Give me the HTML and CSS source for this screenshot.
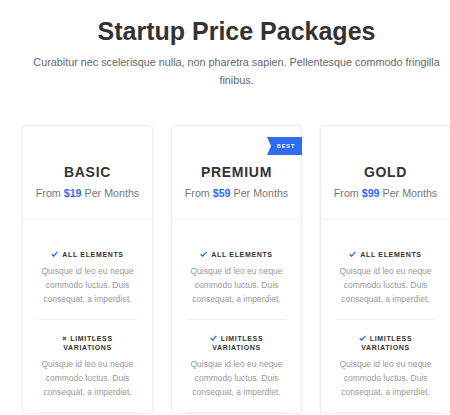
FILE: index.html
```html
<!DOCTYPE html>
<html>
<head>
<meta charset="utf-8">
<link rel="stylesheet" href="styles.css">
</head>
<body>
<div class="page">
  <header class="intro">
    <h1 class="title">Startup Price Packages</h1>
    <p class="lead">Curabitur nec scelerisque nulla, non pharetra sapien. Pellentesque commodo fringilla finibus.</p>
  </header>
  <div class="plans">
    <div class="card">
      <div class="card-head">
        <h2 class="plan">BASIC</h2>
        <p class="price">From <b>$19</b> Per Months</p>
      </div>
      <ul class="features">
        <li class="feature">
          <h3 class="ftitle"><svg class="ico" viewBox="0 0 10 8"><path d="M1 4.2 L3.8 7 L9 1" fill="none" stroke="#2f6cf0" stroke-width="2"/></svg>ALL ELEMENTS</h3>
          <p class="fdesc">Quisque id leo eu neque commodo luctus. Duis consequat, a imperdiet.</p>
        </li>
        <li class="feature">
          <h3 class="ftitle"><svg class="ico x" viewBox="0 0 8 8"><path d="M1.5 1.5 L6.5 6.5 M6.5 1.5 L1.5 6.5" fill="none" stroke="#555" stroke-width="2"/></svg>LIMITLESS<br>VARIATIONS</h3>
          <p class="fdesc">Quisque id leo eu neque commodo luctus. Duis consequat, a imperdiet.</p>
        </li>
      </ul>
    </div>
    <div class="card">
      <span class="ribbon">BEST</span>
      <div class="card-head">
        <h2 class="plan">PREMIUM</h2>
        <p class="price">From <b>$59</b> Per Months</p>
      </div>
      <ul class="features">
        <li class="feature">
          <h3 class="ftitle"><svg class="ico" viewBox="0 0 10 8"><path d="M1 4.2 L3.8 7 L9 1" fill="none" stroke="#2f6cf0" stroke-width="2"/></svg>ALL ELEMENTS</h3>
          <p class="fdesc">Quisque id leo eu neque commodo luctus. Duis consequat, a imperdiet.</p>
        </li>
        <li class="feature">
          <h3 class="ftitle"><svg class="ico" viewBox="0 0 10 8"><path d="M1 4.2 L3.8 7 L9 1" fill="none" stroke="#2f6cf0" stroke-width="2"/></svg>LIMITLESS<br>VARIATIONS</h3>
          <p class="fdesc">Quisque id leo eu neque commodo luctus. Duis consequat, a imperdiet.</p>
        </li>
      </ul>
    </div>
    <div class="card">
      <div class="card-head">
        <h2 class="plan">GOLD</h2>
        <p class="price">From <b>$99</b> Per Months</p>
      </div>
      <ul class="features">
        <li class="feature">
          <h3 class="ftitle"><svg class="ico" viewBox="0 0 10 8"><path d="M1 4.2 L3.8 7 L9 1" fill="none" stroke="#2f6cf0" stroke-width="2"/></svg>ALL ELEMENTS</h3>
          <p class="fdesc">Quisque id leo eu neque commodo luctus. Duis consequat, a imperdiet.</p>
        </li>
        <li class="feature">
          <h3 class="ftitle"><svg class="ico" viewBox="0 0 10 8"><path d="M1 4.2 L3.8 7 L9 1" fill="none" stroke="#2f6cf0" stroke-width="2"/></svg>LIMITLESS<br>VARIATIONS</h3>
          <p class="fdesc">Quisque id leo eu neque commodo luctus. Duis consequat, a imperdiet.</p>
        </li>
      </ul>
    </div>
  </div>
</div>
</body>
</html>
```
FILE: styles.css
```css
html, body {
  margin: 0;
  padding: 0;
  background: #fff;
  overflow: hidden;
}
body {
  font-family: "Liberation Sans", Arial, sans-serif;
  color: #333;
}
.page {
  width: 474px;
  padding: 0 23px 0 22px;
  box-sizing: border-box;
}
.intro {
  text-align: center;
  padding-top: 16px;
}
.title {
  margin: 0;
  font-size: 25px;
  line-height: 30px;
  font-weight: 700;
  color: #333;
}
.lead {
  margin: 7px 0 0;
  font-size: 10.8px;
  line-height: 18px;
  color: #666;
}
.plans {
  display: grid;
  grid-template-columns: repeat(3, 131px);
  column-gap: 18px;
  margin-top: 36px;
}
.card {
  position: relative;
  border: 1px solid #eee;
  border-radius: 4px;
  box-shadow: 0 0 3px rgba(0,0,0,0.06);
  background: #fff;
}
.card-head {
  text-align: center;
  padding: 37px 0 19px;
  border-bottom: 1px solid #f0f0f0;
}
.plan {
  margin: 0;
  font-size: 14px;
  line-height: 18px;
  font-weight: 700;
  letter-spacing: 0.7px;
  color: #333;
}
.price {
  margin: 5px 0 0;
  font-size: 10.7px;
  line-height: 14px;
  color: #777;
}
.price b {
  color: #2f6cf0;
  font-weight: 700;
}
.ribbon {
  position: absolute;
  top: 11px;
  right: -1px;
  width: 35px;
  height: 18px;
  background: #2f6cf0;
  color: #fff;
  font-size: 5.5px;
  font-weight: 700;
  letter-spacing: 1px;
  line-height: 18px;
  text-align: center;
  padding-left: 3px;
  box-sizing: border-box;
  clip-path: polygon(0 0, 100% 0, 100% 100%, 0 100%, 4px 50%);
}
.features {
  list-style: none;
  margin: 0;
  padding: 16px 15px 0;
}
.feature {
  text-align: center;
  padding: 14px 0 13px;
  border-bottom: 1px solid #f0f0f0;
}
.ftitle {
  margin: 0;
  font-size: 7px;
  line-height: 9px;
  font-weight: 700;
  letter-spacing: 0.65px;
  color: #333;
}
.ico {
  width: 7px;
  height: 6px;
  margin-right: 4px;
  vertical-align: 0;
}
.ico.x {
  width: 5px;
  height: 5px;
  margin-right: 3px;
}
.fdesc {
  margin: 5px 0 0;
  font-size: 8.5px;
  line-height: 14px;
  color: #999;
}
```
